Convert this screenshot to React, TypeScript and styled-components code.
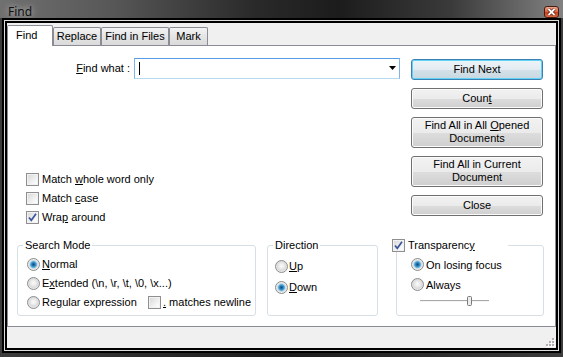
import React from 'react'
import styled, { createGlobalStyle } from 'styled-components';

const GlobalStyle = createGlobalStyle`
  html, body {
    margin: 0;
    padding: 0;
    background: #2a2a2a;
    overflow: hidden;
  }
  body {
    font-family: "Liberation Sans", Arial, sans-serif;
    font-size: 11px;
    color: #000;
  }
`

const Window = styled.div`
  width: 563px;
  height: 357px;
  display: flex;
  flex-direction: column;
  background: linear-gradient(to right, #3c3c3c, #1c1c1c 50%, #3c3c3c);
`
const TitleBar = styled.div`
  height: 18px;
  display: flex;
  justify-content: space-between;
  align-items: flex-start;
  padding: 0 4px 0 8px;
  background: linear-gradient(to right, #707070 0%, #575757 20%, #2a2a2a 45%, #1c1c1c 60%, #3a3a3a 80%, #828282 100%);
`
const TitleText = styled.span`
  font-family: "Noto Sans", "Open Sans", sans-serif;
  font-size: 12px;
  line-height: 13px;
  padding-top: 5px;
  color: #111;
  text-shadow: 0 0 6px rgba(255, 255, 255, 0.55), 0 0 10px rgba(255, 255, 255, 0.35);
`
const CloseButton = styled.div`
  width: 15px;
  height: 12px;
  margin-top: 6px;
  box-sizing: border-box;
  border: 1px solid #4a1a10;
  border-radius: 3px;
  background: linear-gradient(#eca58e, #dc6a4b 45%, #c8421f 55%, #d86a45);
  display: flex;
  align-items: center;
  justify-content: center;
`
const Client = styled.div`
  margin: 5px 7px 9px;
  height: 325px;
  display: flex;
  flex-direction: column;
  background: #f0f0f0;
  box-shadow: 0 0 0 2px #000, 0 0 0 3px #dcdcdc, 0 0 0 5px #000;
`
const TabStrip = styled.div`
  height: 22px;
  display: flex;
  align-items: flex-end;
  position: relative;
  z-index: 1;
`
const Tab = styled.div<{ $active?: boolean; $w: number }>`
  box-sizing: border-box;
  width: ${p => p.$w}px;
  height: ${p => (p.$active ? 21 : 18)}px;
  margin-bottom: ${p => (p.$active ? -1 : 0)}px;
  border: 1px solid #898c95;
  border-bottom: none;
  border-radius: 2px 2px 0 0;
  background: ${p => (p.$active ? '#fff' : 'linear-gradient(#f3f3f3, #e6e6e6 45%, #dadada)')};
  display: flex;
  align-items: center;
  justify-content: ${p => (p.$active ? 'flex-start' : 'center')};
  padding: ${p => (p.$active ? '0 0 2px 8px' : '0')};
  white-space: nowrap;
`
const Panel = styled.div`
  height: 283px;
  box-sizing: border-box;
  background: #fff;
  border: 1px solid #898c95;
  padding-top: 12px;
  display: flex;
  flex-direction: column;
`
const TopRow = styled.div`
  display: flex;
  align-items: flex-start;
`
const LeftCol = styled.div`
  width: 392px;
  display: flex;
  flex-direction: column;
`
const FindRow = styled.div`
  display: flex;
  align-items: center;
  gap: 4px;
`
const FieldLabel = styled.span`
  width: 122px;
  text-align: right;
  white-space: nowrap;
`
const Combo = styled.div`
  width: 266px;
  height: 21px;
  box-sizing: border-box;
  border: 1px solid #7eb4ea;
  border-bottom-color: #b7d9ed;
  border-top-color: #569de5;
  display: flex;
  align-items: center;
  justify-content: space-between;
  padding: 0 3px 0 4px;
  background: #fff;
`
const Caret = styled.span`
  width: 1px;
  height: 13px;
  background: #000;
`
const Options = styled.div`
  margin-top: 91px;
  padding-left: 18px;
  display: flex;
  flex-direction: column;
`
const Option = styled.label<{ $h?: number; $gap?: number }>`
  display: flex;
  align-items: center;
  height: ${p => p.$h ?? 19}px;
  gap: ${p => p.$gap ?? 3}px;
  white-space: nowrap;
`
const OptionText = styled.span`
  white-space: nowrap;
`
const SplitRow = styled.div`
  display: grid;
  grid-template-columns: 121px auto;
  align-items: center;
  height: 19px;
`
const Box = styled.span`
  width: 13px;
  height: 13px;
  flex-shrink: 0;
  box-sizing: border-box;
  border: 1px solid #8f8f8f;
  background: linear-gradient(135deg, #d6d6d6, #f6f6f6 70%, #fff);
  box-shadow: inset 0 0 0 1px #f2f2f2;
  display: flex;
  align-items: center;
  justify-content: center;
`
const RadioDot = styled.span<{ $checked?: boolean }>`
  width: 13px;
  height: 13px;
  flex-shrink: 0;
  box-sizing: border-box;
  border-radius: 50%;
  border: 1px solid #8a8c8e;
  background: ${p =>
    p.$checked
      ? 'radial-gradient(circle, #0f4a7a 0, #2a78b3 1.6px, #5ab0de 3px, #a9d8f0 3.7px, #dcdcdc 4.2px, #eaeaea 5px, #f7f7f7 6px)'
      : 'radial-gradient(circle at 50% 45%, #fbfbfb 0, #ececec 2.5px, #dadada 4.5px, #eeeeee 6px)'};
`
const U = styled.u`
  text-underline-offset: 1px;
`
const RightCol = styled.div`
  width: 132px;
  margin: 1px 0 0 11px;
  display: flex;
  flex-direction: column;
  gap: 8px;
`
const ActionButton = styled.button<{ $tall?: boolean; $default?: boolean }>`
  width: 132px;
  height: ${p => (p.$tall ? 31 : 21)}px;
  padding: 0;
  box-sizing: border-box;
  font-family: "Liberation Sans", Arial, sans-serif;
  font-size: 11px;
  line-height: 13px;
  color: #000;
  border-radius: 3px;
  border: 1px solid ${p => (p.$default ? '#3c7fb1' : '#707070')};
  background: ${p =>
    p.$default
      ? 'linear-gradient(#eef4f8, #e3ecf2 50%, #d4e1e9 51%, #c9d8e1)'
      : 'linear-gradient(#f2f2f2, #ebebeb 50%, #dddddd 51%, #cfcfcf)'};
  box-shadow: ${p => (p.$default ? 'inset 0 0 0 1px #5fd3f5' : 'inset 0 0 0 1px #fbfbfb')};
`
const GroupRow = styled.div`
  display: flex;
  margin-top: 12px;
  padding-left: 9px;
`
const Group = styled.fieldset<{ $w: number; $ml?: number; $pl: number; $pt?: number }>`
  box-sizing: border-box;
  width: ${p => p.$w}px;
  height: 77px;
  margin: 0 0 0 ${p => p.$ml ?? 0}px;
  min-width: 0;
  padding: ${p => p.$pt ?? 3}px 0 0 ${p => p.$pl}px;
  border: 1px solid #d5dfe5;
  border-radius: 3px;
`
const GroupTitle = styled.legend<{ $ml: number; $w?: number }>`
  margin-left: ${p => p.$ml}px;
  padding: 0 2px;
  line-height: 13px;
  height: 13px;
  box-sizing: border-box;
  width: ${p => (p.$w ? `${p.$w}px` : 'auto')};
  display: flex;
  align-items: center;
  gap: 3px;
  white-space: nowrap;
`
const SliderRow = styled.div`
  height: 12px;
  padding-left: 9px;
  display: flex;
  align-items: center;
`
const Footer = styled.div`
  height: 20px;
  display: flex;
  justify-content: flex-end;
  align-items: flex-end;
  padding: 0 1px 1px 0;
`

function CheckBox({ checked }: { checked?: boolean }) {
  return (
    <Box>
      {checked && (
        <svg width="11" height="11" viewBox="0 0 11 11">
          <path d="M2 5.5 L4.3 8.3 L9 1.8" fill="none" stroke="#3b559a" strokeWidth="1.7" />
        </svg>
      )}
    </Box>
  )
}

export default function App() {
  return (
    <>
      <GlobalStyle />
      <Window>
        <TitleBar>
          <TitleText>Find</TitleText>
          <CloseButton>
            <svg width="9" height="8" viewBox="0 0 9 8">
              <path d="M1.5 1 L7.5 7 M7.5 1 L1.5 7" stroke="#5a1a0a" strokeWidth="3.2" />
              <path d="M1.5 1 L7.5 7 M7.5 1 L1.5 7" stroke="#fff" strokeWidth="1.8" />
            </svg>
          </CloseButton>
        </TitleBar>
        <Client>
          <TabStrip>
            <Tab $active $w={46}>Find</Tab>
            <Tab $w={48}>Replace</Tab>
            <Tab $w={68}>Find in Files</Tab>
            <Tab $w={39}>Mark</Tab>
          </TabStrip>
          <Panel>
            <TopRow>
              <LeftCol>
                <FindRow>
                  <FieldLabel><U>F</U>ind what :</FieldLabel>
                  <Combo>
                    <Caret />
                    <svg width="7" height="4" viewBox="0 0 7 4">
                      <path d="M0 0 H7 L3.5 4 Z" fill="#000" />
                    </svg>
                  </Combo>
                </FindRow>
                <Options>
                  <Option><CheckBox /><OptionText>Match <U>w</U>hole word only</OptionText></Option>
                  <Option><CheckBox /><OptionText>Match <U>c</U>ase</OptionText></Option>
                  <Option><CheckBox checked /><OptionText>Wra<U>p</U> around</OptionText></Option>
                </Options>
              </LeftCol>
              <RightCol>
                <ActionButton $default>Find Next</ActionButton>
                <ActionButton>Coun<U>t</U></ActionButton>
                <ActionButton $tall>Find All in All <U>O</U>pened<br />Documents</ActionButton>
                <ActionButton $tall>Find All in Current<br />Document</ActionButton>
                <ActionButton>Close</ActionButton>
              </RightCol>
            </TopRow>
            <GroupRow>
              <Group $w={239} $pl={9}>
                <GroupTitle $ml={-4}>Search Mode</GroupTitle>
                <Option $gap={2}><RadioDot $checked /><OptionText><U>N</U>ormal</OptionText></Option>
                <Option $gap={2}><RadioDot /><OptionText>E<U>x</U>tended (\n, \r, \t, \0, \x...)</OptionText></Option>
                <SplitRow>
                  <Option $gap={2}><RadioDot /><OptionText>Re<U>g</U>ular expression</OptionText></Option>
                  <Option $gap={2}><CheckBox /><OptionText><U>.</U> matches newline</OptionText></Option>
                </SplitRow>
              </Group>
              <Group $w={111} $ml={11} $pl={7} $pt={4}>
                <GroupTitle $ml={-2}>Direction</GroupTitle>
                <Option $h={21} $gap={1}><RadioDot /><OptionText><U>U</U>p</OptionText></Option>
                <Option $h={21} $gap={1}><RadioDot $checked /><OptionText><U>D</U>own</OptionText></Option>
              </Group>
              <Group $w={148} $ml={18} $pl={14}>
                <GroupTitle $ml={-21} $w={118}>
                  <CheckBox checked /><OptionText>Transparenc<U>y</U></OptionText>
                </GroupTitle>
                <Option $h={20} $gap={2}><RadioDot $checked /><OptionText>On losing focus</OptionText></Option>
                <Option $h={20} $gap={2}><RadioDot /><OptionText>Always</OptionText></Option>
                <SliderRow>
                  <svg width="72" height="12" viewBox="0 0 72 12">
                    <rect x="0" y="5" width="69" height="1" fill="#a9a9a9" />
                    <rect x="0" y="6" width="69" height="1" fill="#f4f4f4" />
                    <rect x="47.5" y="1.5" width="4" height="9" rx="1" fill="#ececec" stroke="#7a7a7a" />
                  </svg>
                </SliderRow>
              </Group>
            </GroupRow>
          </Panel>
          <Footer>
            <svg width="10" height="10" viewBox="0 0 10 10">
              {[[7, 1], [7, 4], [4, 4], [7, 7], [4, 7], [1, 7]].map(([x, y]) => (
                <g key={`${x}-${y}`}>
                  <rect x={x + 1} y={y + 1} width="2" height="2" fill="#fff" />
                  <rect x={x} y={y} width="2" height="2" fill="#b4adad" />
                </g>
              ))}
            </svg>
          </Footer>
        </Client>
      </Window>
    </>
  )
}
